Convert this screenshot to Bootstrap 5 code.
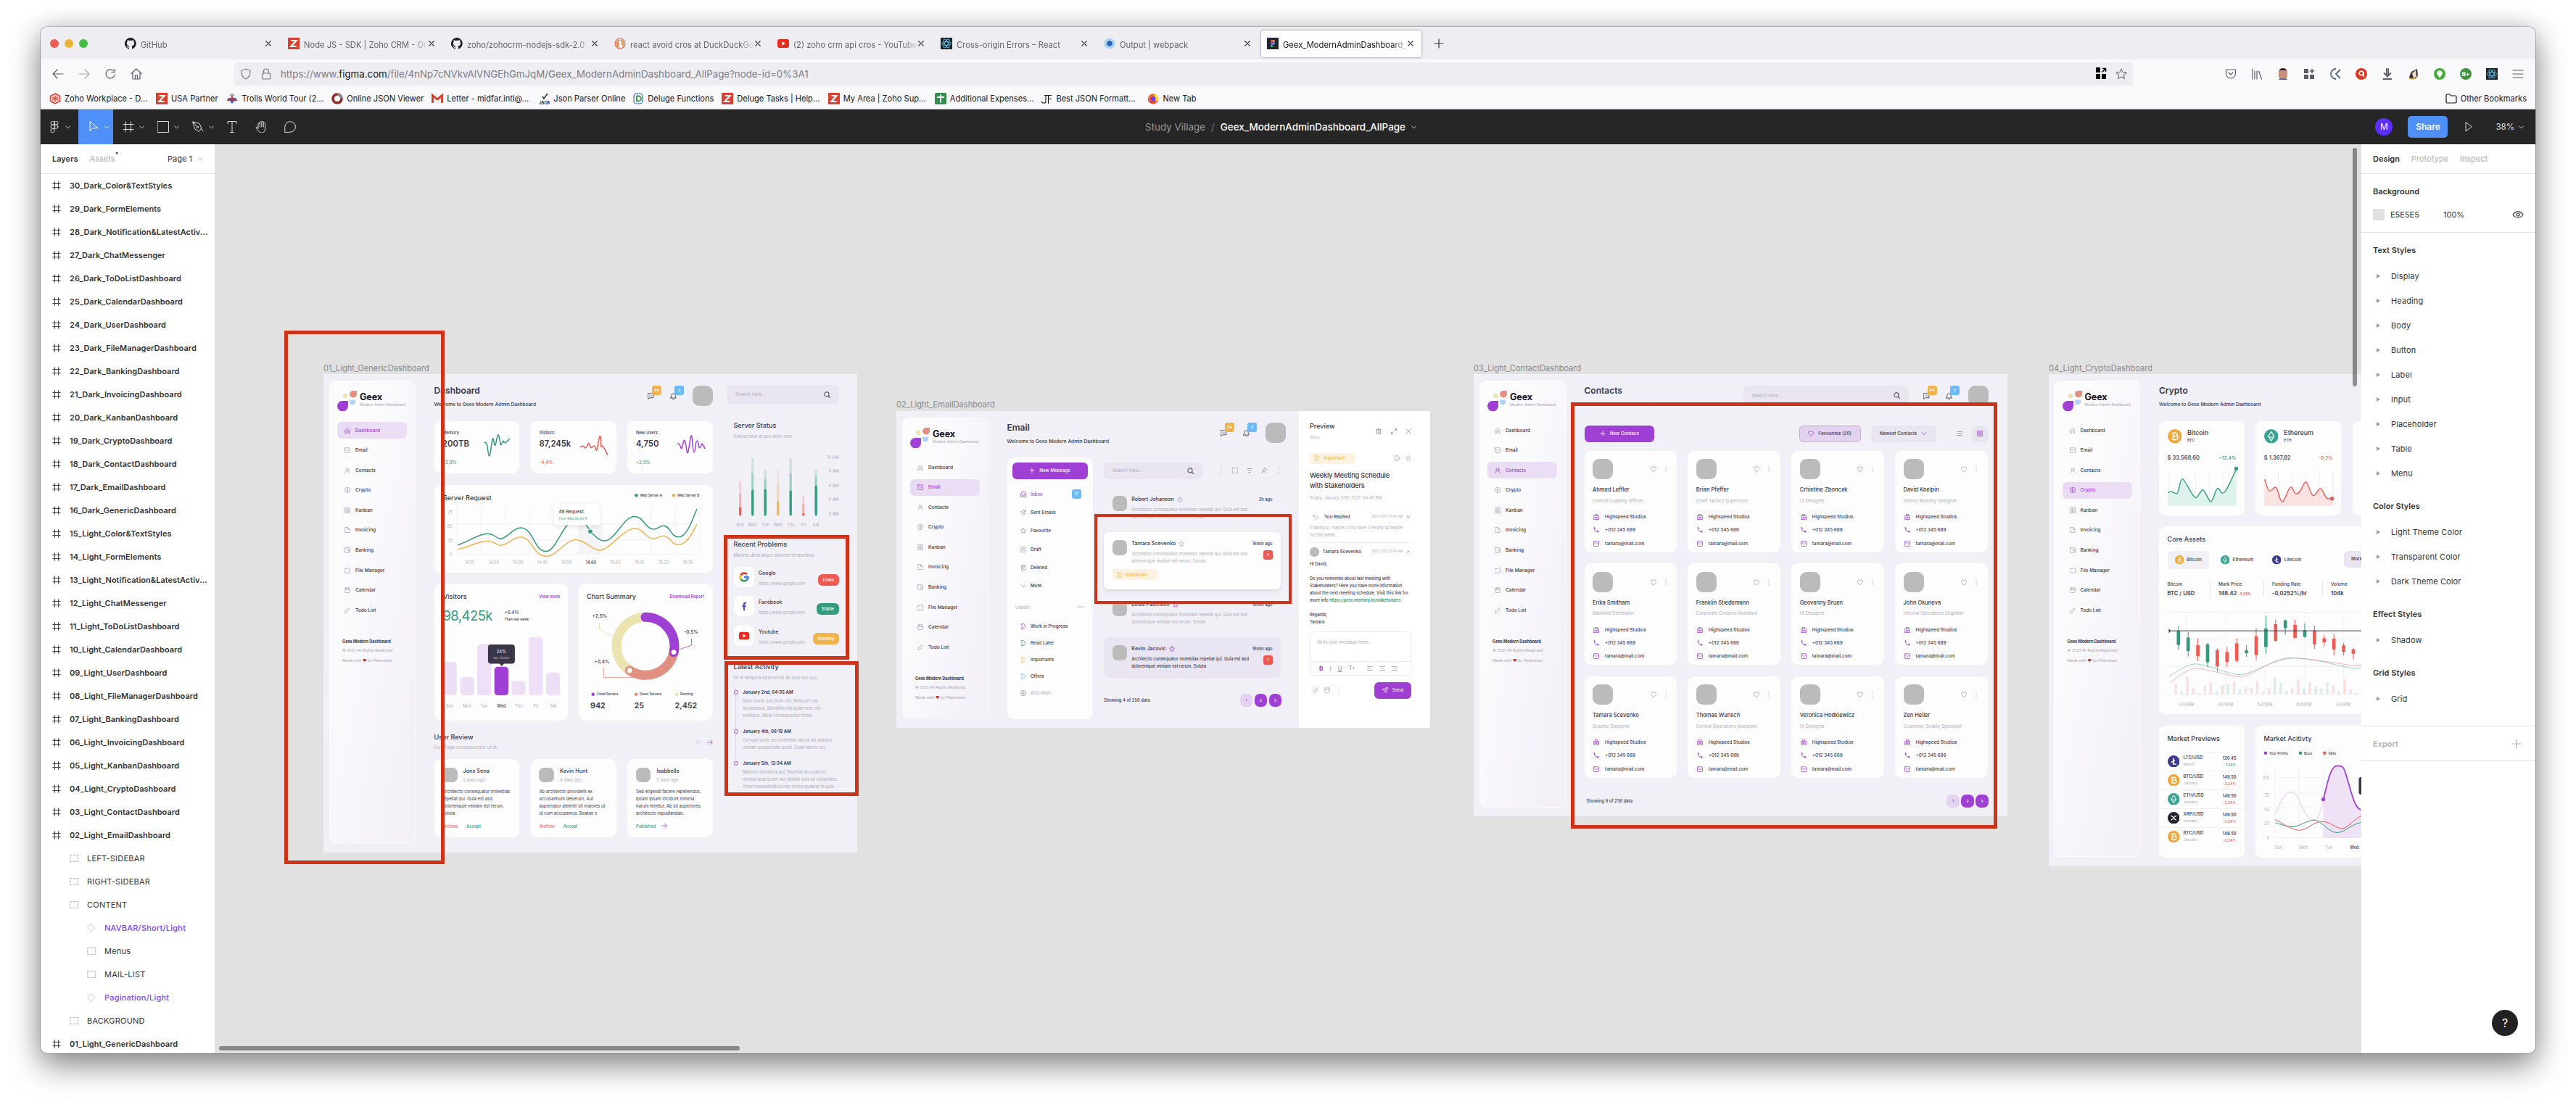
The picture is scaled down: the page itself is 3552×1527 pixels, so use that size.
<!DOCTYPE html>
<html lang="en">
<head>
<meta charset="utf-8">
<meta name="viewport" content="width=device-width, initial-scale=1">
<title>Geex_ModernAdminDashboard_AllPage</title>
<link rel="stylesheet" href="https://cdn.jsdelivr.net/npm/bootstrap@5.3.0/dist/css/bootstrap.min.css">
<style>
body{background:#fff;font-family:Inter,"Liberation Sans",sans-serif;font-size:11px;line-height:16px;color:#333;overflow:hidden;width:3552px;height:1527px}
i[data-ic]{display:inline-flex;flex:none;font-style:normal}
svg{display:block}
.ic{width:16px;height:16px;fill:none;stroke:currentColor;stroke-width:1.2;stroke-linecap:round;stroke-linejoin:round;overflow:visible}
.browser{width:3440px;height:1416px;border-radius:10px;overflow:hidden;background:#f9f9fb}
.shade{border-radius:10px;width:3440px;height:1416px;margin:37px 56px;box-shadow:0 0 0 1px rgba(0,0,0,.22),0 18px 44px rgba(0,0,0,.42),0 0 34px rgba(0,0,0,.16)}
/* browser chrome */
.tabstrip{height:45px;background:#eeedf2;padding-left:13px}
.lights{width:95px;gap:8px}
.light{width:12px;height:12px;border-radius:50%}
.l-r{background:#ec5f55}.l-y{background:#ecb537}.l-g{background:#3ec040}
.btab{width:221px;height:37px;margin-right:4px;padding:0 8px;border-radius:4px;color:#66656b;font-size:11.2px;margin-top:1px}
.btab.on{background:#fff;color:#15141a;box-shadow:0 0 3px rgba(40,30,80,.55)}
.btab .ttl{flex:1;margin-left:6px;white-space:nowrap;overflow:hidden;-webkit-mask-image:linear-gradient(90deg,#000 88%,transparent);padding-top:3px}
.btab .x{width:8px;height:8px;color:#333;margin-right:3px}
.btab .x .ic{width:8px;height:8px;stroke-width:2.2}
.fav{width:16px;height:16px;flex:none;display:flex;align-items:center;justify-content:center;overflow:hidden}
.fav svg{width:16px;height:16px}
.urlrow{height:36px;padding:4px 16px 0 16px;color:#5b5b66}
.urlbox{width:2618px;height:32px;background:#eeedf2;border-radius:4px;font-size:13.3px;color:#7c7b83;padding:0 8px}
.urlbox b{font-weight:400;color:#15141a}
.navs{width:251px;gap:20px}
.exts{gap:20px}
.marks{height:33px;padding:3px 0 0 12px;color:#15141a;font-size:11.1px;border-bottom:1px solid #c3c3c6}
.mk{gap:5px;white-space:nowrap;flex:none}
/* editor bar */
.ebar{height:48px;background:#262626;color:#dcdcdc;font-size:13.4px}
.ebar .ic{stroke-width:1}
.tool{height:48px;width:48px;gap:7px;padding-left:13px}
.tool.one{width:40px;padding-left:12px}
.tool.mainm{width:52px;padding-left:11px}
.tool.on{background:#4f8ff8;color:#fff}
.tool .cv .ic,.cvs .ic{width:7px;height:7px;stroke-width:2}
.usr{width:24px;height:24px;border-radius:50%;background:#5b2eff;color:#fff;font-size:12px;margin-right:21px}
.share{width:55px;height:30px;border-radius:5px;background:#4f8ff8;color:#fff;font-size:12px;font-weight:600;margin-right:21px}
.zoomv{font-size:11.5px;margin:0 6px 0 29px}
/* side panels */
.pane{width:240px;background:#fff;flex:none;overflow:hidden;font-size:11px}
.phead{height:41px;border-bottom:1px solid #e2e2e2;padding:0 16px;flex:none}
.dim{color:#b0b0b0}
.lay{height:32px;padding-left:16px;gap:8px;flex:none;white-space:nowrap;letter-spacing:.02em}
.lay.frm{font-weight:600;letter-spacing:.002em}
.lay .ic{width:12px;height:12px;stroke-width:1.3}
.lay i{width:16px;justify-content:center}
.lay.d1{padding-left:40px}.lay.d2{padding-left:64px}
.lay.cmp{color:#7b44f2;font-weight:500}.lay.cmp i{color:#cdbcf8}.lay.grp i{color:#aaa}
.sec{padding:8px 16px 0}
.sec .st{height:32px;font-weight:600;line-height:32px;margin-bottom:3px}
.sec .si{height:34px;line-height:34px;padding-left:5px;letter-spacing:.01em}
.sec .si::before{content:"";display:inline-block;border-left:5px solid #999;border-top:3px solid transparent;border-bottom:3px solid transparent;margin-right:15px;vertical-align:1px}
.hl{border-top:1px solid #e2e2e2}
.help{width:36px;height:36px;border-radius:50%;background:#222;color:#fff;font-size:16px;right:24px;bottom:24px}
.swt{width:16px;height:16px;background:#e1e1e1}
/* free canvas */
.cnv{width:2960px;background:#e1e1e1;overflow:hidden;flex:none}
.board{position:absolute;background:#f1f0f7;width:736px;font-size:6.3px;line-height:10px;color:#3a3748;white-space:nowrap;font-weight:500}
.board .ic{width:8px;height:8px;stroke-width:1.5}
.bl{position:absolute;font-size:11.1px;color:#8a8a8a;line-height:14px}
#b1{left:150px;top:317px;height:660px}#b2{left:940px;top:368px;height:437px}#b3{left:1736px;top:317px;height:610px}#b4{left:2528.5px;top:317px;height:679px;width:431.5px;overflow:hidden}
#n1{left:150px;top:302px}#n2{left:940px;top:352px}#n3{left:1736px;top:302px}#n4{left:2529px;top:302px}
.ann{position:absolute;border:5px solid #cc3318}
#r1{left:96px;top:257px;width:221px;height:736px}#r2{left:702px;top:539px;width:173px;height:172px}#r3{left:703px;top:713px;width:185px;height:186px}#r4{left:1213px;top:510px;width:272px;height:124px;border-width:4.5px}#r5{left:1870px;top:356px;width:588px;height:588px}
.sbv{position:absolute;right:6px;top:5px;width:6px;height:329px;border-radius:3px;background:rgba(0,0,0,.4)}
.sbh{position:absolute;left:6px;bottom:4px;width:718px;height:6px;border-radius:3px;background:rgba(0,0,0,.4)}
/* Geex boards */
.side{width:119px;margin:9px 0 0 7.5px;border-radius:9px;border:1px solid #fbfaff;background:linear-gradient(100deg,#fcfcfd 20%,#f3f0f8 90%);padding:13px 10.5px;flex:none}
#b1 .side{height:638px}#b2 .side{height:415px}#b3 .side{height:589px}#b4 .side{height:657px}
.lg{height:28px;gap:4px}
.lg b{font-size:12.6px;line-height:13px;font-weight:700;color:#16141f;letter-spacing:-.01em;display:block;margin-top:2px}
.lg small{font-size:5.1px;line-height:9px;color:#a9a6b4;display:block;font-weight:400}
.nv{margin-top:15px;gap:4.6px}
.nv div{height:23px;border-radius:6px;padding-left:10px;gap:7px;font-size:6.5px}
.nv i{color:#a5a3af}
.nv .on{background:linear-gradient(90deg,#e9dbf4,#ebdff5);color:#a03fd4}.nv .on i{color:#a03fd4}
.ft{padding:26.6px 0 0 7px;font-size:5.4px;color:#a9a6b4;font-weight:400}
.ft b{color:#3a3748;display:block;font-weight:700;letter-spacing:-.01em;font-size:5.6px}.ft span{display:block;margin-top:1.6px}.ft span+span{margin-top:4px}
.th{font-size:12px;line-height:14px;font-weight:600}
.ts{font-size:9.1px;line-height:12px;font-weight:500}
.mut{color:#aeacb8;font-weight:400}
.pu{color:#a03fd4}.gr{color:#339b7b}.re{color:#ee5a52}.or{color:#f1b44c}.bu{color:#6cbaf8}
.mn{width:384.5px;margin-left:26px;flex:none}
.hd{height:48.5px;margin-top:16px}
.hd .sb{margin-top:6.5px;font-size:6.65px}
.nb{position:relative;width:31px;height:28px;padding-top:10px}
.nb .ic{width:9px;height:9px}
.bdg{background:#f1b44c;color:#fff;border-radius:3px;width:13px;height:13px;font-size:5.2px;line-height:13px;text-align:center}
.nb .bdg{position:absolute;left:6px;top:0}
.bdg.b{background:#6cbaf8}.bdg.r{background:#ee5a52}
.av{background:#bbb;flex:none;width:28px;height:28px;border-radius:9px}
.av.s{width:20.5px;height:20.5px;border-radius:7px}.av.t{width:12.5px;height:12.5px;border-radius:6px}
.sr{background:#e9e6f2;border-radius:6px;height:27.5px;padding:0 12px;color:#aeacb8;font-weight:400}
.sr i{color:#3a3748}.sr .ic{width:9px;height:9px;stroke-width:1.8}
.cd{background:#fdfdfe;border-radius:9px;flex:none}
.stat{width:117.6px;height:72.7px;padding:11.5px}
.stat .v{font-size:11.3px;line-height:14px;font-weight:600;margin:2.5px 0 14px}
.stat .l{font-size:5.8px}
.stat svg{width:40px;height:34px;margin-top:6px;margin-right:-1px;fill:none;stroke-width:1.5;overflow:visible}
svg .p{vector-effect:non-scaling-stroke;fill:none}
svg text{font-size:5.7px;fill:#aeacb8;font-weight:400}
svg text.k{fill:#3a3748;font-weight:500}
svg text.num{font-size:10.8px;font-weight:600}
svg text.hdg{font-size:9.1px}
.rev{width:117.6px;padding:11.5px;height:108px}
.rev .tx{font-size:5.9px;margin-top:8px;font-weight:400}
.btn-p{background:#a03fd4;color:#fff;border-radius:6px;height:23.5px;gap:6px;font-size:6.3px}
.prow{height:28px;margin-bottom:12.7px}
.prow .bx{width:28px;height:28px;border-radius:8px;background:#fff;margin-right:6.5px}
.prow .bx svg{width:14px;height:14px}
.pil{color:#fff;border-radius:6px;height:16px;line-height:16px;padding:0 6.5px;font-size:5.7px;margin-top:8px}
.tl{border-left:1px solid #d9d6e4;margin-left:2.5px;padding-left:9px;position:relative}
.tl::before{content:"";position:absolute;left:-3px;top:2px;width:6px;height:6px;border:1.3px solid #a03fd4;border-radius:50%;background:#fff}
.tl.last{border-color:transparent}
.tl b{font-weight:600;display:block;font-size:6.1px;margin-bottom:2px}
.mm{height:25.3px;padding-left:18px;gap:6.5px}
.mm i{color:#9b98a8}.mm.lb{height:23px}
.chip{background:#fcf2df;color:#f1b44c;height:15px;border-radius:4px;width:62.5px;gap:5px;padding-left:6px}
.pg span{width:17.5px;height:18px;border-radius:7px;background:#a03fd4;color:#fff;text-align:center;line-height:18px;font-size:5px}
.pg{gap:2.3px}.pg span:first-child{background:#e4d3f0;color:#a03fd4}
.em{width:244px;padding:11.5px;border-radius:7px;font-size:5.75px}
.em .nm{font-size:7.2px}
.em .chip{font-size:6.3px}
.em .bd{width:174px;margin-left:6.3px}
.when{margin-left:-20px;width:60px;text-align:right}
.prev{width:180.6px;background:#fff;margin-left:auto;padding:14.6px 26px 0 14.6px;flex:none}
.cc{height:140px;padding:11.5px}
.ccg{display:grid;grid-template-columns:repeat(4,127.6px);gap:15.5px 15.25px}
.cc .nm{font-size:7.5px;margin-top:10.2px}
.cc .rl{margin:4.3px 0 8.2px;font-size:6.2px}
.cc .rw{height:18.4px;gap:8px;margin-left:1px}
.cc .rw i{color:#a03fd4}
.cc .top{color:#9b98a8;gap:9px}
.coin{width:19.5px;height:19.5px}.coin.m{width:16.5px;height:16.5px}.coin.s{width:12.5px;height:12.5px}
.mp{height:26px;border-top:1px solid #f3f1f6;padding:0 11.5px;gap:5.5px;line-height:9px}
.kpi{border-left:1px solid #e6e4ee;height:22px;padding-left:11.5px}
.kpi b{display:block;font-weight:600;font-size:7.6px;line-height:11px;margin-top:2px}
</style>
</head>
<body>
<svg width="0" height="0" class="position-absolute" aria-hidden="true"><defs>
<symbol id="home" viewBox="0 0 16 16"><path d="M2 6.5 8 1l6 5.500V15h-3.500V9.500a2.500 2.500 0 0 0-5 0V15H2z"/></symbol>
<symbol id="mail" viewBox="0 0 16 16"><rect x="1" y="1.500" width="14" height="13.500" rx="1.500"/><path d="m3.500 5 4.500 4.500L12.500 5"/></symbol>
<symbol id="user" viewBox="0 0 16 16"><circle cx="8" cy="5" r="4"/><path d="M1.500 15.500C2 11 4.500 9 8 9s6 2 6.500 6.500"/></symbol>
<symbol id="coin" viewBox="0 0 16 16"><circle cx="8" cy="8" r="7.300"/><path d="M10.500 5.500C9 4 5.800 4.500 5.800 6.300 5.800 8.500 10.300 7.500 10.300 9.800c0 1.900-3.500 2-5 .5M8 3.500v9"/></symbol>
<symbol id="grid" viewBox="0 0 16 16"><path d="M1 1h5.500v5.500H1zM9.500 1H15v5.500H9.500zM1 9.500h5.500V15H1zM9.500 9.500H15V15H9.500z"/></symbol>
<symbol id="file" viewBox="0 0 16 16"><path d="M2.500 1H9l5 5v9H2.500zM9 1v5h5"/></symbol>
<symbol id="wallet" viewBox="0 0 16 16"><rect x="1" y="1.500" width="14" height="13" rx="1"/><path d="M15 6h-4.500a2 2 0 0 0 0 4H15"/></symbol>
<symbol id="folder" viewBox="0 0 16 16"><path d="M1 3h7l1.500-1.800H15V14.500H1z"/></symbol>
<symbol id="bfold" viewBox="0 0 16 16"><path d="M1 3.500a1.500 1.500 0 0 1 1.500-1.500H6l1.500 2h6A1.500 1.500 0 0 1 15 5.500v7a1.500 1.500 0 0 1-1.500 1.500h-11A1.500 1.500 0 0 1 1 12.500z"/></symbol>
<symbol id="cal" viewBox="0 0 16 16"><rect x="1.500" y="2" width="13" height="13" rx="2"/><path d="M1.500 7h13M5 .5v3M11 .5v3"/></symbol>
<symbol id="pencil" viewBox="0 0 16 16"><path d="m1.500 14.500.8-4.500L11 1.300l3.500 3.400L6 13.600z"/></symbol>
<symbol id="chat" viewBox="0 0 16 16"><path d="M1 1.500h13V12H5l-4 3zM4.500 7h.1M7.500 7h.1M10.500 7h.1"/></symbol>
<symbol id="bell" viewBox="0 0 16 16"><path d="M1 12.500h14L13 10V6.500a5 5 0 0 0-10 0V10zM6.500 15.300h3"/></symbol>
<symbol id="search" viewBox="0 0 16 16"><circle cx="7" cy="7" r="5.500"/><path d="m11 11 4 4"/></symbol>
<symbol id="heart" viewBox="0 0 16 16"><path d="M8 15C2 11 1 8 1 5.500 1 1.500 6 .5 8 4c2-3.500 7-2.500 7 1.500C15 8 14 11 8 15z"/></symbol>
<symbol id="vdots" viewBox="0 0 16 16"><path d="M8 2v.2M8 8v.2M8 14v.2" stroke-width="2.500"/></symbol>
<symbol id="hdots" viewBox="0 0 16 16"><path d="M2 8h.2M8 8h.2M14 8h.2" stroke-width="2.500"/></symbol>
<symbol id="plus" viewBox="0 0 16 16"><path d="M8 2v12M2 8h12"/></symbol>
<symbol id="x" viewBox="0 0 16 16"><path d="m1.500 1.500 13 13M14.500 1.500l-13 13"/></symbol>
<symbol id="star" viewBox="0 0 16 16"><path d="m8 1 2.100 4.700 5 .5-3.800 3.400 1.100 5L8 12l-4.400 2.600 1.100-5L.9 6.200l5-.5z"/></symbol>
<symbol id="send" viewBox="0 0 16 16"><path d="M15 1 9.500 15 7 9 1 6.500zM15 1 7 9"/></symbol>
<symbol id="trash" viewBox="0 0 16 16"><path d="M1 3.500h14M3 3.500V15h10V3.500M5.500 3.500V1h5v2.500M6.500 7v5M9.500 7v5"/></symbol>
<symbol id="cd" viewBox="0 0 16 16"><path d="m1.500 4.500 6.500 7 6.500-7"/></symbol>
<symbol id="cu" viewBox="0 0 16 16"><path d="m1.500 11.500 6.500-7 6.500 7"/></symbol>
<symbol id="label" viewBox="0 0 16 16"><path d="M2 1.500h7.500L14.500 8l-5 6.500H2L5.500 8z"/></symbol>
<symbol id="inbox" viewBox="0 0 16 16"><path d="M1 9 3 1.500h10L15 9v6H1zM1 9h4l1 2.500h4L11 9h4"/></symbol>
<symbol id="edit" viewBox="0 0 16 16"><path d="M9 2H1.500v13H14V8M5.500 11l.5-3 7-7 2 2-7 7z"/></symbol>
<symbol id="addc" viewBox="0 0 16 16"><circle cx="8" cy="8" r="7.300"/><path d="M8 4.500v7M4.500 8h7"/></symbol>
<symbol id="info" viewBox="0 0 16 16"><circle cx="8" cy="8" r="7"/><path d="M8 4.500V9M8 11.500v.1"/></symbol>
<symbol id="sq" viewBox="0 0 16 16"><rect x="0" y=".5" width="16" height="15" rx="1.500"/></symbol>
<symbol id="filt" viewBox="0 0 16 16"><path d="M2 3h12M4 8h8M6 13h4"/></symbol>
<symbol id="pin" viewBox="0 0 16 16"><path d="m10 1 5 5-2 .5-3 3L9.500 13 3 6.500 6.500 6l3-3zM6 10l-5 5"/></symbol>
<symbol id="exp" viewBox="0 0 16 16"><path d="M10 1h5v5M15 1l-5.500 5.500M6 15H1v-5M1 15l5.500-5.500"/></symbol>
<symbol id="reply" viewBox="0 0 16 16"><path d="M5.500 1.500 1 5.500l4.500 4M1 5.500h9c6 0 6 9 0 9H8"/></symbol>
<symbol id="brief" viewBox="0 0 16 16"><path d="M1 5h14v10H1zM5 5V1h6v4M1 10h5M10 10h5M6.500 8.500h3v3h-3z"/></symbol>
<symbol id="phone" viewBox="0 0 16 16"><path d="M2.500 1.500v1c0 6 5 11 11.500 11" stroke-width="2" fill="none"/><path d="M1.500 1h3l.8 4-2.300 1zM10 12l1-2 4 1v3.500h-3z" fill="currentColor" stroke="none"/></symbol>
<symbol id="clip" viewBox="0 0 16 16"><path d="m14 7-6 6.500a3 3 0 0 1-5-4L9 3a2 2 0 0 1 3.500 3L7 11.500"/></symbol>
<symbol id="al" viewBox="0 0 16 16"><path d="M1 3h14M1 8h9M1 13h14"/></symbol>
<symbol id="ac" viewBox="0 0 16 16"><path d="M1 3h14M4 8h8M1 13h14"/></symbol>
<symbol id="ar" viewBox="0 0 16 16"><path d="M1 3h14M6 8h9M1 13h14"/></symbol>
<symbol id="menu" viewBox="0 0 16 16"><path d="M1 3h14M1 8h14M1 13h14"/></symbol>
<symbol id="left" viewBox="0 0 16 16"><path d="M15 8H1.500M7 2 1 8l6 6"/></symbol>
<symbol id="right" viewBox="0 0 16 16"><path d="M1 8h13.500M9 2l6 6-6 6"/></symbol>
<symbol id="reload" viewBox="0 0 16 16"><path d="M14 9a6 6 0 1 1-1.500-5.200M14.500 1v4.500H10"/></symbol>
<symbol id="house" viewBox="0 0 16 16"><path d="m1 7.500 7-6.500 7 6.500M3 6v9h10V6M6.500 15V9.500h3V15"/></symbol>
<symbol id="shield" viewBox="0 0 16 16"><path d="M8 1C6 2.500 4 3 2 3c-.5 6 1.500 10 6 12 4.500-2 6.500-6 6-12-2 0-4-.5-6-2z"/></symbol>
<symbol id="lock" viewBox="0 0 16 16"><rect x="2.500" y="7" width="11" height="8" rx="1"/><path d="M4.500 7V4.500a3.500 3.500 0 0 1 7 0V7"/></symbol>
<symbol id="hash" viewBox="0 0 16 16"><path d="M4.500 1v14M11.500 1v14M1 4.500h14M1 11.500h14"/></symbol>
<symbol id="grp" viewBox="0 0 16 16"><path d="M1 4V2h2M6.500 2h3M13 2h2v2M15 6.500v3M15 12v2h-2M9.500 14h-3M3 14H1v-2M1 9.500v-3"/></symbol>
<symbol id="dia" viewBox="0 0 16 16"><path d="m8 1 7 7-7 7-7-7z"/></symbol>
<symbol id="figma" viewBox="0 0 16 16"><path d="M8 0H5.500a2.500 2.500 0 0 0 0 5H8zM8 0h2.500a2.500 2.500 0 0 1 0 5H8zM8 5.300H5.500a2.500 2.500 0 0 0 0 5H8zM8 10.600H5.500A2.600 2.600 0 1 0 8 13.400z"/><circle cx="10.500" cy="7.800" r="2.500"/></symbol>
<symbol id="move" viewBox="0 0 16 16"><path d="M3 1v13l4-4 6.500-.5z"/></symbol>
<symbol id="rect" viewBox="0 0 16 16"><path d="M.5.500h15v15H.5z"/></symbol>
<symbol id="pen" viewBox="0 0 16 16"><path d="m1 1 9 2.500 3 6.500-4 4.500L4 11zM1 1l6 7M12 10.500l3 3.500"/><circle cx="7.500" cy="8.300" r="1.200"/></symbol>
<symbol id="text" viewBox="0 0 16 16"><path d="M2 3.500V.5h12v3M8 .5v15M5.500 15.500h5"/></symbol>
<symbol id="hand" viewBox="0 0 16 16"><path d="M4 10V4a1.200 1.200 0 0 1 2.400 0V2a1.200 1.200 0 0 1 2.400 0V1.500a1.200 1.200 0 0 1 2.400 0V3a1.200 1.200 0 0 1 2.400.3V11c0 6-7.600 6.500-9.600 2.500L.8 9c.8-1.500 2.200-1 3.200 1zM6.400 4v4M8.800 3v5M11.200 3v5"/></symbol>
<symbol id="cmt" viewBox="0 0 16 16"><path d="M.8 15.300V8A7.300 7.300 0 1 1 8 15.300z"/></symbol>
<symbol id="play" viewBox="0 0 16 16"><path d="M4 2v12l8-6z"/></symbol>
<symbol id="eye" viewBox="0 0 16 16"><path d="M1 8c4-5.500 10-5.500 14 0-4 5.500-10 5.500-14 0z"/><circle cx="8" cy="8" r="2"/></symbol>
<symbol id="pocket" viewBox="0 0 16 16"><path d="M1.500 2h13v5.500a6.500 6.500 0 0 1-13 0zM5 6l3 3 3-3"/></symbol>
<symbol id="books" viewBox="0 0 16 16"><path d="M2 1v14M5 4v11M8 4v11M10.500 4l4 11"/></symbol>
<symbol id="dl" viewBox="0 0 16 16"><path d="M6.800 1v9M9.200 1v9M3.500 7 8 11.500 12.500 7M2.500 15h11" stroke-width="1.800"/></symbol>
<symbol id="tiles" viewBox="0 0 16 16"><path d="M1 1h6v6H1zM1 9h6v6H1zM9 9h6v6H9z" fill="currentColor" stroke="none"/><path d="M9.500 4h5M12 1.500v5" stroke-width="1.600"/></symbol>
<symbol id="tilesx" viewBox="0 0 16 16"><path d="M1 0h6v7H1zM1 9h6v7H1zM9 9h6v7H9z" fill="currentColor" stroke="none"/><path d="M10 6l4-4M10.500 1.500H14.500V5.500" stroke-width="1.600"/></symbol>
<!-- full-colour marks -->
<symbol id="f-gh" viewBox="0 0 16 16"><path fill="#1b1f24" d="M8 0a8 8 0 0 0-2.500 15.600c.4 0 .5-.2.500-.4v-1.500c-2.200.5-2.700-1-2.700-1-.4-1-.9-1.200-.9-1.200-.7-.5.1-.5.1-.5.800.1 1.200.8 1.200.8.700 1.200 1.900.9 2.300.7.100-.5.300-.9.500-1.100-1.800-.2-3.600-.9-3.600-4 0-.8.300-1.500.8-2.100 0-.2-.3-1 .1-2.100 0 0 .7-.2 2.200.8a7.600 7.600 0 0 1 4 0c1.500-1 2.200-.8 2.200-.8.400 1.100.1 1.900.1 2.100.5.600.8 1.300.8 2.100 0 3.100-1.900 3.800-3.700 4 .3.300.6.800.6 1.500v2.200c0 .2.100.5.500.4A8 8 0 0 0 8 0z"/></symbol>
<symbol id="f-z" viewBox="0 0 16 16"><path fill="#d8402f" d="M0 0h16v16H0z"/><path d="M4.500 4h7l-7 8h7" fill="none" stroke="#fff" stroke-width="2.200"/></symbol>
<symbol id="f-ddg" viewBox="0 0 16 16"><circle cx="8" cy="8" r="7.500" fill="#de5833"/><circle cx="8" cy="8" r="6" fill="#e98a63" stroke="#fff"/><path d="M6 4c3-1 5 1 4.500 5l.5 4H7z" fill="#fff"/><path d="M8.500 8h3.500" stroke="#f5b82e" stroke-width="1.500"/></symbol>
<symbol id="f-yt" viewBox="0 0 16 16"><rect y="2" width="16" height="12" rx="3" fill="#ea2a1f"/><path d="M6.300 5.200v5.600L11 8z" fill="#fff"/></symbol>
<symbol id="f-re" viewBox="0 0 16 16"><path fill="#20232a" d="M0 0h16v16H0z"/><g fill="none" stroke="#5ab8d8"><ellipse cx="8" cy="8" rx="6.500" ry="2.500"/><ellipse cx="8" cy="8" rx="6.500" ry="2.500" transform="rotate(60 8 8)"/><ellipse cx="8" cy="8" rx="6.500" ry="2.500" transform="rotate(120 8 8)"/></g></symbol>
<symbol id="f-wp" viewBox="0 0 16 16"><path d="m8 0 7 4v8l-7 4-7-4V4z" fill="#a9d3f3"/><path d="m8 4 3.500 2v4L8 12l-3.500-2V6z" fill="#2b5fb5"/></symbol>
<symbol id="f-fg" viewBox="0 0 16 16"><path fill="#24242e" d="M0 0h16v16H0z"/><path fill="#ef4f2b" d="M8 3H6.500a1.700 1.700 0 0 0 0 3.400H8z"/><path fill="#f9705f" d="M8 3h1.500a1.700 1.700 0 0 1 0 3.400H8z"/><path fill="#a259ff" d="M8 6.400H6.500a1.700 1.700 0 0 0 0 3.400H8z"/><circle cx="9.600" cy="8.100" r="1.700" fill="#26b6f4"/><circle cx="6.500" cy="11.400" r="1.700" fill="#1bce75"/></symbol>
<symbol id="f-wk" viewBox="0 0 16 16"><path d="m8 1 6.500 3.500v7L8 15l-6.500-3.500v-7z" fill="#f6cfcb" stroke="#df4034" stroke-width="1.500"/><path d="M8 4v8M4 6l8 4M12 6l-8 4" stroke="#df4034" stroke-width="1.300"/></symbol>
<symbol id="f-tr" viewBox="0 0 16 16"><path d="M8 1v4M5 2l3 4 3-4" stroke="#555" fill="none"/><path d="M2 7h12l-6 8z" fill="#3f51b5"/><path d="M1 9h5v2H1zM10 9h5v2h-5z" fill="#d33"/><circle cx="8" cy="8" r="2" fill="#d33"/></symbol>
<symbol id="f-oj" viewBox="0 0 16 16"><circle cx="8" cy="8" r="6" fill="none" stroke="#8f2a2a" stroke-width="3.500"/><path d="M8 2a6 6 0 0 1 6 6" fill="none" stroke="#888" stroke-width="3.500"/></symbol>
<symbol id="f-gm" viewBox="0 0 16 16"><path d="M1.500 14V3.500L8 9l6.500-5.500V14" fill="#eee" stroke="#d5392d" stroke-width="2.800"/></symbol>
<symbol id="f-js" viewBox="0 0 16 16"><path d="m6 5 2 3 5-7" stroke="#222" stroke-width="1.400" fill="none"/><text x="1" y="15.500" style="font-size:6px;fill:#1c1c5c;font-weight:700">JSON</text></symbol>
<symbol id="f-df" viewBox="0 0 16 16"><rect x="2" y="1" width="12" height="14" rx="4" fill="none" stroke="#3c6fc4" stroke-width="1.600" stroke-dasharray="2 .8"/><path d="M6 4.500h2.500a3.500 3.500 0 0 1 0 7H6z" fill="none" stroke="#3a9c4c" stroke-width="1.800"/></symbol>
<symbol id="f-gs" viewBox="0 0 16 16"><rect width="16" height="16" rx="1.500" fill="#35904f"/><path d="M8 2.500v11M3 6h10" stroke="#fff" stroke-width="1.800"/></symbol>
<symbol id="f-jf" viewBox="0 0 16 16"><path d="M5 3.500h10M7 3.500V12c0 3-5 3-6 0M10.500 3.500v11.500M10.500 8.500H15" stroke="#111" stroke-width="1.100" fill="none"/></symbol>
<symbol id="f-ff" viewBox="0 0 16 16"><circle cx="8" cy="8.500" r="7.200" fill="#f9692f"/><path d="M9 0c4 2 6.500 5 6 9-1 4-4 3-6-1z" fill="#fddc3b"/><circle cx="8" cy="8.500" r="3.600" fill="#7a3bd8"/><path d="M1 9c1 6 10 8 13 2-3 3-9 3-13-2z" fill="#e8305f"/></symbol>
<symbol id="f-face" viewBox="0 0 16 16"><rect x="2" y="0" width="12" height="16" rx="5" fill="#c98f78"/><path d="M3 4c0-5 10-5 10 0l-1-1H4z" fill="#2a2020"/><path d="M2 16c1-3 11-3 12 0z" fill="#5a6690"/></symbol>
<symbol id="f-k" viewBox="0 0 16 16"><path d="M9 1a7 7 0 0 0 0 14M15 2 9 8l6 6" fill="none" stroke="#5a6873" stroke-width="1.800"/></symbol>
<symbol id="f-q" viewBox="0 0 16 16"><circle cx="8" cy="8" r="8" fill="#dd3a26"/><circle cx="8" cy="7" r="2.800" fill="none" stroke="#fff" stroke-width="1.600"/><path d="M10.800 5v7" stroke="#fff" stroke-width="1.600"/></symbol>
<symbol id="f-bg" viewBox="0 0 16 16"><path d="M2 12 5 5l8-4 1 9-4 4H3z" fill="#3a3430"/><path d="m6 7 5-4 1 8-4 3z" fill="#eadfce"/><path d="M2 14c3 1 8 1 12-2" stroke="#d59b4a" stroke-width="1.500" fill="none"/></symbol>
<symbol id="f-hg" viewBox="0 0 16 16"><circle cx="8" cy="8" r="8" fill="#44a838"/><path d="M8 3a4 4 0 0 1 2.500 7L8 13.500 5.500 10A4 4 0 0 1 8 3z" fill="#fff"/></symbol>
<symbol id="f-bp" viewBox="0 0 16 16"><circle cx="8" cy="8" r="8" fill="#409440"/><text x="2.500" y="11" style="font-size:8px;fill:#fff;font-weight:700">B+</text></symbol>
<symbol id="c-btc" viewBox="0 0 20 20"><circle cx="10" cy="10" r="10" fill="#f2a73b"/><path d="M7.500 5.500h4a2 2 0 0 1 0 4.300h-4zM7.500 9.800h4.600a2.200 2.200 0 0 1 0 4.600H7.500zM6 5.500h2M6 14.400h2M9 4v1.500M11.300 4v1.500M9 14.500V16M11.300 14.500V16" fill="none" stroke="#fff" stroke-width="1.500"/></symbol>
<symbol id="c-eth" viewBox="0 0 20 20"><circle cx="10" cy="10" r="10" fill="#3aa394"/><path d="m10 3.500 4 6.500-4 6.500L6 10zM6 10l4 2 4-2" fill="none" stroke="#fff" stroke-width="1.200"/></symbol>
<symbol id="c-ltc" viewBox="0 0 20 20"><circle cx="10" cy="10" r="10" fill="#3d3a90"/><path d="M9.500 4.500v10H14M6 11.500l6-3" fill="none" stroke="#fff" stroke-width="1.900"/></symbol>
<symbol id="c-xrp" viewBox="0 0 20 20"><circle cx="10" cy="10" r="10" fill="#23232b"/><path d="M5.500 6 10 9.500 14.500 6M5.500 14l4.500-3.500 4.500 3.500" fill="none" stroke="#fff" stroke-width="1.500"/></symbol>
<symbol id="geex" viewBox="0 0 27 28"><path fill="#a03fd4" d="M0 21a7 7 0 0 1 7-7h8v7a7.300 7.300 0 0 1-15 0z"/><path fill="#e08f80" d="M17 5a5 5 0 0 1 5-5h5v4.500a5 5 0 0 1-10 0z"/><path fill="#ebe3b0" d="M8 6.500a3 3 0 0 1 6 0V10h-3a3 3 0 0 1-3-3.500z"/><path fill="#b5d3f6" d="M17 12.500h8v4a4.200 4.200 0 0 1-8 0z"/></symbol>
</defs></svg>

<div class="shade"><div class="browser d-flex flex-column">
  <header class="tabstrip d-flex align-items-center flex-shrink-0">
    <div class="lights d-flex"><span class="light l-r"></span><span class="light l-y"></span><span class="light l-g"></span></div>
    <div class="d-flex" id="tabs"></div>
    <i data-ic="plus" class="ms-2 ps-1"></i>
  </header>
  <div class="urlrow d-flex align-items-center flex-shrink-0">
    <div class="navs d-flex align-items-center"><i data-ic="left"></i><i data-ic="right" class="opacity-50"></i><i data-ic="reload"></i><i data-ic="house"></i></div>
    <div class="urlbox d-flex align-items-center"><i data-ic="shield"></i><i data-ic="lock" class="ms-2 me-2 ps-1"></i><span id="url" class="ps-1">https://www.<b>figma.com</b>/file/4nNp7cNVkvAlVNGEhGmJqM/Geex_ModernAdminDashboard_AllPage?node-id=0%3A1</span>
      <span class="ms-auto text-black me-2 pe-1"><i data-ic="tilesx"></i></span><i data-ic="star"></i></div>
    <div class="exts d-flex align-items-center ms-auto" id="exts"></div>
  </div>
  <div class="d-flex align-items-center flex-shrink-0 marks">
    <div class="d-flex" id="marks"></div>
    <div class="mk d-flex align-items-center ms-auto me-2 pe-1"><i data-ic="bfold"></i>Other Bookmarks</div>
  </div>

  <div class="ebar d-flex align-items-center flex-shrink-0 position-relative">
    <div class="tool mainm d-flex align-items-center"><i data-ic="figma"></i><i data-ic="cd" class="cv"></i></div>
    <div class="tool on d-flex align-items-center"><i data-ic="move"></i><i data-ic="cd" class="cv"></i></div>
    <div class="tool d-flex align-items-center"><i data-ic="hash"></i><i data-ic="cd" class="cv"></i></div>
    <div class="tool d-flex align-items-center"><i data-ic="rect"></i><i data-ic="cd" class="cv"></i></div>
    <div class="tool d-flex align-items-center"><i data-ic="pen"></i><i data-ic="cd" class="cv"></i></div>
    <div class="tool one d-flex align-items-center"><i data-ic="text"></i></div>
    <div class="tool one d-flex align-items-center"><i data-ic="hand"></i></div>
    <div class="tool one d-flex align-items-center"><i data-ic="cmt"></i></div>
    <div class="position-absolute start-0 end-0 d-flex justify-content-center align-items-center gap-2 pe-3 me-1"><span style="color:#999">Study Village</span><span class="text-secondary">/</span><span class="text-white fw-medium">Geex_ModernAdminDashboard_AllPage</span><i data-ic="cd" class="cvs"></i></div>
    <div class="ms-auto d-flex align-items-center pe-3">
      <span class="usr d-flex align-items-center justify-content-center">M</span><span class="share d-flex align-items-center justify-content-center">Share</span>
      <i data-ic="play"></i><span class="zoomv">38%</span><i data-ic="cd" class="cvs"></i>
    </div>
  </div>

  <main class="d-flex flex-grow-1 overflow-hidden">
    <section class="pane d-flex flex-column">
      <div class="phead d-flex align-items-center"><b class="fw-semibold">Layers</b><span class="dim ms-3">Assets</span><span class="mb-3 fs-6 lh-1 fw-bold">·</span><span class="ms-auto me-1">Page 1</span><i data-ic="cd" class="cvs dim ms-1"></i></div>
      <div id="layers" class="d-flex flex-column"></div>
    </section>

    <section class="cnv position-relative">
      <div class="bl" id="n1">01_Light_GenericDashboard</div><div class="bl" id="n2">02_Light_EmailDashboard</div><div class="bl" id="n3">03_Light_ContactDashboard</div><div class="bl" id="n4">04_Light_CryptoDashboard</div>

      <!-- 01 generic dashboard -->
      <article class="board d-flex" id="b1">
        <aside class="side" data-on="Dashboard"></aside>
        <div class="mn">
          <div class="hd d-flex"><div class="me-auto"><div class="th">Dashboard</div><div class="sb">Welcome to Geex Modern Admin Dashboard</div></div><div class="nb"><i data-ic="chat"></i><span class="bdg">84</span></div><div class="nb"><i data-ic="bell"></i><span class="bdg b">2</span></div><div class="av"></div></div>
          <div class="d-flex justify-content-between">
            <div class="cd stat d-flex justify-content-between"><div><div class="l">Memory</div><div class="v">200TB</div><div class="gr">+2,5%</div></div><svg viewBox="0 0 40 34" stroke="#339b7b"><path d="M2 13c2-3 3 1 4 4 2 18 3 18 5 4 2-17 3-17 4-9 2 10 3 0 4-5 2-13 4 1 5 7 1 5 3-4 4-4 2 5 3 3 9-3"/></svg></div>
            <div class="cd stat d-flex justify-content-between"><div><div class="l">Visitors</div><div class="v">87,245k</div><div class="re">-4,4%</div></div><svg viewBox="0 0 40 34" stroke="#ee5a52"><path d="M1 19c3-3 5-2 7 1 3-1 4-10 6-5 2 9 4 2 6 2s3 8 4 6c2-7 3-22 5-19 1 5 0 12 1 14l2-1c3 4 4 7 7 13"/></svg></div>
            <div class="cd stat d-flex justify-content-between"><div><div class="l">New Users</div><div class="v">4,750</div><div class="gr">+2,5%</div></div><svg viewBox="0 0 40 34" stroke="#a03fd4"><path d="M1 14c2-1 3 1 4 3 2 8 3 1 4-4 2-8 3-2 4 4 2 16 3 11 5-4 2-14 3-13 4 1 1 17 3 13 4 4 1-11 3-9 4-3 2 10 3 1 5-1 2 2 3 4 4 7"/></svg></div>
          </div>
          <div class="cd mt-3"><svg width="384.500" height="121" viewBox="152.600 152.800 384.500 121">
            <text x="164.500" y="174" class="k hdg">Server Request</text>
            <circle cx="431" cy="167" r="2.300" fill="#339b7b"/><text x="436" y="169" class="k" style="font-size:4.700px">Web Server A</text><circle cx="482.500" cy="167" r="2.300" fill="#f1b44c"/><text x="487.500" y="169" class="k" style="font-size:4.700px">Web Server B</text>
            <path stroke="#f1f0f5" d="M183.500 206.500H519M183.500 228.500H519M183.500 248.500H519M183.500 183v66M217 183v66M250.500 183v66M284 183v66M451.500 183v66M485 183v66M518.500 183v66"/><path fill="#f4f3f8" d="M351 206h33.500v43H351z"/>
            <g id="yl" text-anchor="end"><text x="177.500" y="192.500">75</text><text x="177.500" y="212">50</text><text x="177.500" y="231.500">25</text><text x="177.500" y="251">0</text></g>
            <g id="xl" text-anchor="middle"></g>
            <g transform="matrix(.523 0 0 .4847 -66 -76)" stroke-width="1.500"><path class="p" stroke="#f1b44c" d="M480 655C510 648 535 632 557 632S580 644 592 644C610 644 625 620 645 620 675 620 680 675 712 675 740 675 765 628 790 628 815 628 835 658 853 658 880 658 915 596 946 596 970 596 975 625 995 625 1008 625 1010 617 1022 617 1040 617 1040 642 1062 642 1085 642 1100 603 1110 584"/><path class="p" stroke="#339b7b" d="M480 643C510 632 535 611 557 611S580 625 592 625C610 625 625 594 645 594 680 594 680 661 712 661 740 661 760 570 790 570 808 570 822 590 829 604 845 622 855 631 866 631 895 631 915 562 946 562 970 562 975 598 995 598 1008 598 1010 588 1022 588 1040 588 1040 620 1062 620 1085 620 1100 565 1110 540"/></g>
            <circle cx="367.500" cy="217" r="3.300" fill="#339b7b" stroke="#fff" stroke-width=".8"/><path fill="#fff" d="m364.500 207.500 3 4 3-4z"/><rect x="317.500" y="179" width="63" height="29" rx="3" fill="#fff" filter="drop-shadow(0 2px 3px rgba(0,0,0,.1))"/><text x="324" y="192.300" class="k" style="font-size:6.300px">48 Request</text><text x="324" y="201" style="fill:#339b7b;font-size:4.300px">From Web Server B</text>
          </svg></div>
          <div class="d-flex justify-content-between" style="margin-top:15px">
            <div class="cd"><svg width="184.600" height="189" viewBox="152.600 289 184.600 189">
              <text x="164.500" y="310" class="k hdg">Visitors</text><text x="326" y="309.500" text-anchor="end" style="fill:#a03fd4;font-weight:600">View more</text>
              <text x="164" y="340" style="font-size:18.500px;fill:#339b7b;letter-spacing:-.03em">98,425k</text><text x="249" y="331.500" class="k" style="font-size:6.300px">+0.4%</text><text x="249" y="340" class="k" style="font-size:4.700px">Than last week</text>
              <g transform="matrix(.523 0 0 .4847 -66 -76)" fill="#eddff6"><rect x="440" y="976" width="37" height="95" rx="9"/><rect x="486" y="1019" width="37" height="52" rx="9"/><rect x="531" y="925" width="37" height="146" rx="9"/><rect x="576" y="990" width="37" height="81" rx="9" fill="#a03fd4"/><rect x="621" y="1030" width="37" height="41" rx="9"/><rect x="667" y="905" width="37" height="166" rx="9"/><rect x="712" y="1006" width="37" height="65" rx="9"/></g>
              <rect x="226.500" y="373" width="37" height="26.500" rx="4" fill="#3a3748"/><path fill="#3a3748" d="m242 399 3.500 4 3.500-4z"/><text x="245" y="385" text-anchor="middle" style="fill:#fff;font-size:5.900px">24%</text><text x="245" y="393.500" text-anchor="middle" style="fill:#b9b6c8;font-size:4px">982 Visitors</text>
              <g text-anchor="middle"><text x="173.500" y="460">Sun</text><text x="197.500" y="460">Mon</text><text x="221" y="460">Tue</text><text x="245" y="460" class="k">Wed</text><text x="269" y="460">Thu</text><text x="292.500" y="460">Fri</text><text x="316.500" y="460">Sat</text></g>
            </svg></div>
            <div class="cd"><svg width="184.600" height="189" viewBox="353 289 184.600 189">
              <text x="364" y="310" class="k hdg">Chart Summary</text><text x="526" y="309.500" text-anchor="end" style="fill:#a03fd4;font-weight:600">Download Report</text>
              <g fill="none" stroke-width="13" stroke-linecap="round"><path stroke="#ebe3b0" d="M423.200 408.800A40 40 0 0 1 445 335.300"/><path stroke="#e08f80" d="M484.100 383.600A40 40 0 0 1 423.200 408.800"/><path stroke="#a03fd4" d="M445 335.300A40 40 0 0 1 484.100 383.600"/></g><circle cx="484.100" cy="383.600" r="3.400" fill="#fff"/><circle cx="423.200" cy="408.800" r="3.400" fill="#fff"/>
              <g fill="none" stroke-width=".8"><path stroke="#e3da9f" d="M381.500 343v9l19 9.500"/><path stroke="#a03fd4" d="M508.500 365v9l-17 6"/><path stroke="#e08f80" d="M387.500 405v13.500h42"/></g>
              <g text-anchor="middle"><text class="k" x="382" y="336" style="font-size:6.600px">+2,5%</text><text class="k" x="508" y="358" style="font-size:6.600px">-0,5%</text><text class="k" x="385" y="399.500" style="font-size:6.600px">+0,4%</text></g>
              <circle cx="372.700" cy="441.700" r="2.300" fill="#a03fd4"/><circle cx="432" cy="441.700" r="2.300" fill="#e08f80"/><circle cx="488" cy="441.700" r="2.300" fill="#ebe3b0"/>
              <g><text x="378" y="443.500" class="k" style="font-size:4.500px">Fixed Servers</text><text x="437" y="443.500" class="k" style="font-size:4.500px">Down Servers</text><text x="493" y="443.500" class="k" style="font-size:4.500px">Running</text><text x="369" y="461.500" class="k num">942</text><text x="429.500" y="461.500" class="k num">25</text><text x="485.500" y="461.500" class="k num">2,452</text></g>
            </svg></div>
          </div>
          <div class="d-flex justify-content-between align-items-center" style="margin:17px 0 11px"><div><div class="ts">User Review</div><div class="mut" style="margin-top:3px">Eum fuga consequuntur ut et.</div></div><div class="d-flex gap-2 pu"><i data-ic="left" class="opacity-25"></i><i data-ic="right"></i></div></div>
          <div class="d-flex justify-content-between align-items-start" id="revs"></div>
        </div>
        <div style="width:154.500px;margin:14.500px 0 0 19px">
          <div class="sr d-flex align-items-center justify-content-between">Search here...<i data-ic="search"></i></div>
          <div style="margin:23px 0 0 9.500px;width:145px"><div class="ts">Server Status</div><div class="mut" style="margin-top:4px;font-size:5.700px">Consectetur et quo dolor vero.</div>
            <svg width="147" height="104" viewBox="565.300 108 147 104" style="margin-top:17px" id="srv"></svg>
            <div class="ts" style="margin-top:17px">Recent Problems</div><div class="mut" style="margin:4px 0 10.500px;font-size:5.800px">Maiores dicta atque dolorem temporibus</div>
            <div class="prow d-flex"><div class="bx d-flex align-items-center justify-content-center"><svg viewBox="0 0 16 16" fill="none" stroke-width="3.200"><path stroke="#e33f2f" d="M2.800 5A6.200 6.200 0 0 1 12.500 3.600"/><path stroke="#f6bb2b" d="M2.800 11a6.200 6.200 0 0 1 0-6"/><path stroke="#38a653" d="M12.300 12.600A6.200 6.200 0 0 1 2.800 11"/><path stroke="#4a80ec" d="M8 8h6.200a6.200 6.200 0 0 1-2 4.700"/></svg></div><div class="me-auto pt-1"><div style="font-size:6.900px">Google</div><div class="mut pt-1" style="font-size:5.500px">https://www.google.com</div></div><span class="pil align-self-center" style="background:#ee5a52">Down</span></div>
            <div class="prow d-flex"><div class="bx d-flex align-items-center justify-content-center"><svg viewBox="0 0 16 16"><path d="M11.500 3H10c-1.500 0-2 .8-2 2v10M5 8h6" fill="none" stroke="#4a56c9" stroke-width="2.400"/></svg></div><div class="me-auto pt-1"><div style="font-size:6.900px">Facebook</div><div class="mut pt-1" style="font-size:5.500px">https://www.google.com</div></div><span class="pil align-self-center" style="background:#339b7b">Stable</span></div>
            <div class="prow d-flex"><div class="bx d-flex align-items-center justify-content-center"><svg><use href="#f-yt"/></svg></div><div class="me-auto pt-1"><div style="font-size:6.900px">Youtube</div><div class="mut pt-1" style="font-size:5.500px">https://www.google.com</div></div><span class="pil align-self-center" style="background:#f1b44c">Warning</span></div>
            <div class="ts" style="margin-top:23.500px">Latest Activity</div><div class="mut" style="margin:4px 0 9.500px;font-size:5.700px">Sit et tempora dicta omnis ab quia quo quo.</div>
            <div class="tl" style="height:54px"><b>January 2nd, 04:35 AM</b><div class="mut" style="font-size:5.700px">Illum omnis quo illum nisi. Nesciunt est<br>accusamus. Blanditiis nisi quae eum nisi<br>similique. Modi consequuntur totam</div></div>
            <div class="tl" style="height:44px"><b>January 4th, 06:19 AM</b><div class="mut" style="font-size:5.700px">Corrupti unde qui molestiae labore ad adipisci<br>veniam perspiciatis quasi. Quae labore vel.</div></div>
            <div class="tl last"><b>January 5th, 12:34 AM</b><div class="mut" style="font-size:5.700px">Maiores doloribus qui. Repellat accusamus<br>minima ipsa ipsam aut debitis quis sit voluptates.<br>Amet necessitatibus non minus quaerat et quis.</div></div>
          </div>
        </div>
      </article>

      <!-- 02 email -->
      <article class="board d-flex" id="b2">
        <aside class="side" data-on="Email"></aside>
        <div class="mn">
          <div class="hd d-flex"><div class="me-auto"><div class="th">Email</div><div class="sb">Welcome to Geex Modern Admin Dashboard</div></div><div class="nb"><i data-ic="chat"></i><span class="bdg">84</span></div><div class="nb"><i data-ic="bell"></i><span class="bdg b">2</span></div><div class="av"></div></div>
          <div class="d-flex" style="margin-top:-1px">
            <div class="cd" style="width:118px;height:361px;padding-top:7px" id="mbox">
              <div class="btn-p d-flex align-items-center justify-content-center mb-2" style="margin:0 7px"><i data-ic="plus"></i>New Message</div>
            </div>
            <div style="margin:7px 0 0 15.500px;width:245px">
              <div class="d-flex align-items-center"><div class="sr d-flex align-items-center justify-content-between" style="width:135.500px;height:23.500px">Search here...<i data-ic="search"></i></div><div class="ms-auto d-flex align-items-center" style="gap:12px;border-left:1px solid #e2dfeb;padding-left:16px;height:20px;color:#8d8a9b"><i data-ic="sq"></i><i data-ic="filt"></i><i data-ic="pin"></i><i data-ic="vdots"></i></div></div>
              <div class="em d-flex" style="margin-top:11.500px;height:61px"><div class="av s"></div><div class="bd"><div class="d-flex align-items-center gap-1 nm">Robert Johanson <i data-ic="star" class="mut"></i></div><div class="mut" style="margin-top:3.500px">Architecto consequatur molestias repellat qui. Quia est asd<br>doloremque veniam est rerum. Soluta</div></div><div class="when">2h ago</div></div>
              <div class="em cd" style="height:79px;box-shadow:0 2px 4px rgba(60,40,100,.12)"><div class="d-flex"><div class="av s"></div><div class="bd"><div class="d-flex align-items-center gap-1 nm">Tamara Scevenko <i data-ic="star" class="mut"></i></div><div class="mut" style="margin-top:3.500px">Architecto consequatur molestias repellat qui. Quia est asd<br>doloremque veniam est rerum. Soluta</div></div><div class="when">16min ago<div class="bdg r ms-auto mt-1">2</div></div></div><div class="chip d-flex align-items-center" style="margin-top:6.500px"><i data-ic="label"></i>Important</div></div>
              <div class="em d-flex" style="margin-top:5px;height:50px"><div class="av s"></div><div class="bd"><div class="d-flex align-items-center gap-1 nm">Louis Pattinson <i data-ic="star" class="pu"></i></div><div class="mut" style="margin-top:3.500px">Architecto consequatur molestias repellat qui. Quia est asd<br>doloremque veniam est rerum. Soluta</div></div><div class="when">18min ago</div></div>
              <div class="em d-flex" style="margin-top:11px;height:56.500px;background:#e9e5f2"><div class="av s"></div><div class="bd"><div class="d-flex align-items-center gap-1 nm">Kevin Jacovic <i data-ic="star" class="pu"></i></div><div style="margin-top:3.500px">Architecto consequatur molestias repellat qui. Quia est asd<br>doloremque veniam est rerum. Soluta</div></div><div class="when">18min ago<div class="bdg r ms-auto mt-1">1</div></div></div>
              <div class="d-flex justify-content-between align-items-center" style="margin-top:22px"><span style="font-size:5.900px">Showing 4 of 256 data</span><div class="pg d-flex"><span>1</span><span>2</span><span>3</span></div></div>
            </div>
          </div>
        </div>
        <div class="prev">
          <div class="d-flex align-items-center justify-content-between"><div><div class="ts">Preview</div><div class="mut" style="font-size:5.300px;margin-top:4px">Inbox</div></div><div class="d-flex" style="gap:12.500px;color:#8d8a9b"><i data-ic="trash"></i><i data-ic="exp"></i><i data-ic="x"></i></div></div>
          <div class="d-flex align-items-center" style="margin-top:17px"><div class="chip d-flex align-items-center me-auto"><i data-ic="label"></i>Important</div><div class="mut d-flex gap-2"><i data-ic="info"></i><i data-ic="star"></i></div></div>
          <div style="font-size:9.200px;line-height:13.700px;font-weight:500;margin-top:9.500px;letter-spacing:-.02em">Weekly Meeting Schedule<br>with Stakeholders</div>
          <div class="mut" style="margin-top:5px;font-size:5.700px">Today, January 30th 2021&nbsp; 04:45 PM</div>
          <div class="d-flex align-items-center" style="margin-top:16px"><i data-ic="reply" class="me-2 ms-1 mut"></i><span class="me-auto">You Replied</span><span class="mut me-1" style="font-size:4.600px;letter-spacing:-.02em">28.01.2021 12:24 AM</span><i data-ic="cd" style="transform:scale(.7)"></i></div>
          <div class="mut" style="margin-top:5.500px;font-size:5.700px">Thankyou, maybe i only have 2 empty schedule<br>for this week..</div>
          <div class="hl" style="margin-top:5px;margin-bottom:6px;border-color:#eceaf2"></div>
          <div class="d-flex align-items-center"><div class="av t" style="margin-right:5px"></div><span class="me-auto">Tamara Scevenko</span><span class="mut me-1" style="font-size:4.600px;letter-spacing:-.02em">28.01.2021 12:24 AM</span><i data-ic="cu" style="transform:scale(.7)"></i></div>
          <div style="margin-top:5px;font-size:5.700px">Hi David,<br><br>Do you remembe about last meeting with<br>Stakeholders? Here you have more information<br>about the next meeting schedule. Visit this link for<br>more info <b class="gr fw-semibold" style="letter-spacing:-.02em">https://geex.meeting.id/stakeholders</b><br><br>Regards,<br>Tamara</div>
          <div style="border:1px solid #eceaf2;border-radius:6px;height:61px;margin-top:8px" class="d-flex flex-column"><div class="mut flex-grow-1" style="padding:9px;font-size:5.900px">Write your message here...</div><div class="d-flex align-items-center" style="border-top:1px solid #eceaf2;height:19px;padding:0 12px;gap:9px;font-size:8px;color:#9b98a8"><b class="pu">B</b><span class="fst-italic">I</span><u>U</u><span class="me-2">T<small style="font-size:5px">T</small></span><i data-ic="al"></i><i data-ic="ac"></i><i data-ic="ar"></i></div></div>
          <div class="d-flex align-items-center mut" style="margin-top:9px;gap:8px;padding-left:4px"><i data-ic="clip"></i><i data-ic="cal"></i><i data-ic="vdots"></i><div class="btn-p d-flex align-items-center justify-content-center ms-auto" style="width:51px"><i data-ic="send"></i>Send</div></div>
        </div>
      </article>

      <!-- 03 contacts -->
      <article class="board d-flex" id="b3">
        <aside class="side" data-on="Contacts"></aside>
        <div style="width:557px;margin-left:26px">
          <div class="hd d-flex" style="height:54.700px"><div class="me-auto"><div class="th">Contacts</div><div class="sb">Welcome to Geex Modern Admin Dashboard</div></div><div class="sr d-flex align-items-center justify-content-between" style="width:228px;margin-right:20px">Search here...<i data-ic="search"></i></div><div class="nb"><i data-ic="chat"></i><span class="bdg">84</span></div><div class="nb"><i data-ic="bell"></i><span class="bdg b">2</span></div><div class="av"></div></div>
          <div class="d-flex align-items-center">
            <div class="btn-p d-flex align-items-center justify-content-center me-auto" style="width:96.500px"><i data-ic="plus"></i>New Contacs</div>
            <div class="btn-p d-flex align-items-center justify-content-center" style="width:85px;background:#e4d3f0;color:#3a3748;border:1px solid #cf9fea"><i data-ic="heart" class="pu"></i>Favourites (20)</div>
            <div class="btn-p d-flex align-items-center justify-content-center" style="width:90px;margin-left:14px;background:#e9e6f2;color:#3a3748">Newest Contacts<i data-ic="cd" class="pu"></i></div>
            <i data-ic="menu" class="ms-4 ps-1 mut" style="color:#8d8a9b"></i><div class="btn-p d-flex align-items-center justify-content-center pu" style="width:23px;background:#e9e6f2;color:#a03fd4;margin-left:13px"><i data-ic="grid"></i></div>
          </div>
          <div class="ccg" id="ccs" style="margin-top:11.500px"></div>
          <div class="d-flex justify-content-between align-items-center" style="margin-top:23px;padding-left:3px"><span style="font-size:5.900px">Showing 9 of 256 data</span><div class="pg d-flex"><span>1</span><span>2</span><span>3</span></div></div>
        </div>
      </article>

      <!-- 04 crypto -->
      <article class="board d-flex" id="b4">
        <aside class="side" data-on="Crypto"></aside>
        <div class="mn" style="width:557px">
          <div class="hd d-flex"><div><div class="th">Crypto</div><div class="sb">Welcome to Geex Modern Admin Dashboard</div></div></div>
          <div class="d-flex" style="gap:15.300px">
            <div class="cd" style="width:118px;height:130px;padding:11.500px"><div class="d-flex"><svg class="coin me-2"><use href="#c-btc"/></svg><div><div style="font-size:8.900px">Bitcoin</div><div style="font-size:5.200px">BTC</div></div></div><div class="d-flex justify-content-between" style="margin-top:15px;font-size:7.600px"><span>$ 33.568,60</span><span class="gr" style="font-size:6.600px">+12,4%</span></div>
              <svg width="98" height="57" viewBox="164 128 98 57" style="margin-top:4px"><g transform="matrix(.3333 0 0 .4655 -44.500 -36)"><path fill="#def3ec" d="M627 436C640 425 648 438 664 438 672 438 676 394 686 394 697 394 728 450 741 450 752 450 760 427 771 427 780 427 795 462 804 462 815 462 822 422 833 422 843 422 842 437 853 437 868 437 892 390 910 364V474H627z"/><path stroke="#e6e4ec" class="p" stroke-width=".6" d="M628 370V474M685 370V474M741 370V474M797 370V474M853 370V474"/><path class="p" stroke="#339b7b" stroke-width="1.400" d="M627 436C640 425 648 438 664 438 672 438 676 394 686 394 697 394 728 450 741 450 752 450 760 427 771 427 780 427 795 462 804 462 815 462 822 422 833 422 843 422 842 437 853 437 868 437 892 390 910 364"/><ellipse cx="909" cy="364" rx="8" ry="6" fill="#339b7b"/></g></svg></div>
            <div class="cd" style="width:118px;height:130px;padding:11.500px"><div class="d-flex"><svg class="coin me-2"><use href="#c-eth"/></svg><div><div style="font-size:8.900px">Ethereum</div><div style="font-size:5.200px">ETH</div></div></div><div class="d-flex justify-content-between" style="margin-top:15px;font-size:7.600px"><span>$ 1.367,82</span><span class="re" style="font-size:6.600px">-0,2%</span></div>
              <svg width="98" height="57" viewBox="297.200 128 98 57" style="margin-top:4px"><g transform="matrix(.3333 0 0 .4655 -44.500 -36)"><path fill="#fbe3e2" d="M1027 396C1035 410 1040 430 1048 430 1058 430 1062 419 1072 419 1083 419 1088 462 1100 462 1112 462 1124 418 1136 418 1146 418 1146 438 1158 438 1180 438 1185 404 1197 404 1210 404 1216 444 1229 444 1240 444 1248 423 1258 423 1270 423 1274 453 1290 453H1310V474H1027z"/><path stroke="#f0d9df" class="p" stroke-width=".6" d="M1028 370V474M1084 370V474M1141 370V474M1197 370V474M1253 370V474M1309 370V474"/><path class="p" stroke="#ee5a52" stroke-width="1.400" d="M1027 396C1035 410 1040 430 1048 430 1058 430 1062 419 1072 419 1083 419 1088 462 1100 462 1112 462 1124 418 1136 418 1146 418 1146 438 1158 438 1180 438 1185 404 1197 404 1210 404 1216 444 1229 444 1240 444 1248 423 1258 423 1270 423 1274 453 1290 453H1306"/><ellipse cx="1306" cy="453" rx="8" ry="6" fill="#ee5a52"/></g></svg></div>
            <div class="cd" style="width:118px;height:130px"></div>
          </div>
          <div class="cd" style="height:259px;margin-top:15.500px;padding:12px 11.500px 0">
            <div class="ts">Core Assets</div>
            <div class="d-flex" style="gap:5.500px;margin-top:10px"><div class="d-flex align-items-center justify-content-center gap-1" style="height:24.500px;width:57.500px;border-radius:6px;background:#f1f0f7"><svg class="coin s"><use href="#c-btc"/></svg>Bitcoin</div><div class="d-flex align-items-center justify-content-center gap-1" style="width:66.500px"><svg class="coin s"><use href="#c-eth"/></svg>Ethereum</div><div class="d-flex align-items-center justify-content-center gap-1" style="width:59.500px"><svg class="coin s"><use href="#c-ltc"/></svg>Litecoin</div><div style="height:23px;line-height:23px;width:70px;border-radius:6px;background:#e9e6f2;padding-left:10px;margin-left:43.500px">Market</div></div>
            <div class="d-flex" style="margin-top:16px"><div class="kpi border-0 ps-0" style="width:58px">Bitcoin<b>BTC / USD</b></div><div class="kpi" style="width:74px">Mark Price<b>148.42 <span class="re" style="font-size:5px">-3.28%</span></b></div><div class="kpi" style="width:81px">Funding Rate<b>-0,0252%/hr</b></div><div class="kpi">Volume<b>104k</b></div></div>
            <svg width="270" height="140" viewBox="164 320 270 140" style="margin-top:14px" id="candle"></svg>
          </div>
          <div class="d-flex" style="gap:15.300px;margin-top:15.500px">
            <div class="cd" style="width:118px;height:182px;padding-top:12px" id="mps"><div class="ts" style="padding-left:11.500px;margin-bottom:12px">Market Previews</div></div>
            <div class="cd" style="width:420px;height:182px"><svg width="160" height="182" viewBox="285.500 484 160 182">
              <text x="297" y="504.800" class="k hdg">Market Acitivty</text>
              <circle cx="299.500" cy="521.700" r="2.300" fill="#a03fd4"/><text x="304.500" y="523.500" class="k" style="font-size:4.600px">Your Profits</text><circle cx="347.500" cy="521.700" r="2.300" fill="#339b7b"/><text x="352.500" y="523.500" class="k" style="font-size:4.600px">Buys</text><circle cx="380.800" cy="521.700" r="2.300" fill="#ee5a52"/><text x="386" y="523.500" class="k" style="font-size:4.600px">Sells</text>
              <g text-anchor="end"><text x="304.500" y="557.500">100</text><text x="304.500" y="582">75</text><text x="304.500" y="601.500">50</text><text x="304.500" y="621">25</text><text x="304.500" y="640.500">0</text></g>
              <g transform="matrix(.3333 0 0 .4655 -44.500 -36)"><path class="p" stroke="#efedf4" stroke-width=".8" d="M1070 1242V1450M1170 1242V1450M1271 1242V1450M1372 1242V1450M1070 1271H1440M1070 1315H1440M1070 1360H1440M1070 1405H1440M1070 1449H1440"/><path fill="#ecdcf5" opacity=".85" d="M1271 1335C1285 1300 1298 1236 1327 1236S1355 1240 1368 1270C1385 1310 1400 1362 1426 1366L1440 1366V1450H1271z"/><path class="p" stroke="#ecdcf5" stroke-width="1.600" d="M1072 1380C1100 1330 1115 1314 1138 1314 1175 1314 1185 1396 1233 1396 1258 1396 1262 1350 1271 1335"/><path class="p" stroke="#a03fd4" stroke-width="1.800" d="M1271 1335C1285 1300 1298 1236 1327 1236S1355 1240 1368 1270C1385 1310 1400 1362 1426 1366"/><path class="p" stroke="#339b7b" d="M1072 1405C1100 1410 1120 1417 1143 1417S1205 1397 1233 1397 1295 1434 1327 1434 1385 1410 1426 1404"/><path class="p" stroke="#ee5a52" d="M1072 1395C1100 1405 1140 1427 1172 1427S1230 1401 1265 1401 1325 1422 1348 1422 1395 1395 1426 1385"/><ellipse cx="1271" cy="1335" rx="8" ry="6" fill="#a03fd4"/></g>
              <rect x="428" y="555" width="30" height="24" rx="3" fill="#3a3748"/>
              <g text-anchor="middle"><text x="317" y="654">Sun</text><text x="352" y="654">Mon</text><text x="386.500" y="654">Tue</text><text x="422" y="654" class="k">Wed</text></g></svg></div>
          </div>
        </div>
      </article>

      <div class="ann" id="r1"></div><div class="ann" id="r2"></div><div class="ann" id="r3"></div><div class="ann" id="r4"></div><div class="ann" id="r5"></div>
      <div class="sbv"></div><div class="sbh"></div>
    </section>

    <section class="pane position-relative">
      <div class="phead d-flex align-items-center gap-3"><b class="fw-semibold">Design</b><span class="dim">Prototype</span><span class="dim">Inspect</span></div>
      <div style="height:81px;padding:8px 16px 0;border-bottom:1px solid #e2e2e2"><b class="fw-semibold d-block" style="line-height:32px">Background</b><div class="d-flex align-items-center" style="height:32px"><span class="swt me-2"></span><span style="width:73px">E5E5E5</span>100%<i data-ic="eye" class="ms-auto"></i></div></div>
      <div class="sec"><div class="st">Text Styles</div><div class="si">Display</div><div class="si">Heading</div><div class="si">Body</div><div class="si">Button</div><div class="si">Label</div><div class="si">Input</div><div class="si">Placeholder</div><div class="si">Table</div><div class="si">Menu</div></div>
      <div class="sec pt-0 mt-2 pt-1"><div class="st">Color Styles</div><div class="si">Light Theme Color</div><div class="si">Transparent Color</div><div class="si">Dark Theme Color</div></div>
      <div class="sec pt-0 mt-2 pt-1"><div class="st">Effect Styles</div><div class="si">Shadow</div></div>
      <div class="sec pt-0 mt-2 pt-1"><div class="st">Grid Styles</div><div class="si">Grid</div></div>
      <div class="d-flex align-items-center justify-content-between dim" style="height:49px;margin-top:20px;border:solid #e2e2e2;border-width:1px 0;padding:0 18px 0 16px"><b class="fw-semibold">Export</b><i data-ic="plus"></i></div>
      <div class="help position-absolute d-flex align-items-center justify-content-center">?</div>
    </section>
  </main>
</div></div>

<script>
const $ = s => document.querySelector(s);
const ico = n => `<svg class="ic"><use href="#${n}"/></svg>`;
const fav = n => `<span class="fav"><svg><use href="#${n}"/></svg></span>`;

$('#tabs').innerHTML = [['f-gh','GitHub'],['f-z','Node JS - SDK | Zoho CRM - On'],['f-gh','zoho/zohocrm-nodejs-sdk-2.0'],['f-ddg','react avoid cros at DuckDuckGo'],['f-yt','(2) zoho crm api cros - YouTube'],['f-re','Cross-origin Errors – React'],['f-wp','Output | webpack'],['f-fg','Geex_ModernAdminDashboard_']]
  .map((t,i) => `<div class="btab d-flex align-items-center ${i==7?'on':''}">${fav(t[0])}<span class="ttl">${t[1]}</span><span class="x">${ico('x')}</span></div>`).join('');
$('#marks').innerHTML = [['f-wk','Zoho Workplace - D...',147],['f-z','USA Partner',97.3],['f-tr','Trolls World Tour (2...',145],['f-oj','Online JSON Viewer',138],['f-gm','Letter - midfar.intl@...',147],['f-js','Json Parser Online',130],['f-df','Deluge Functions',123],['f-z','Deluge Tasks | Help...',146.5],['f-z','My Area | Zoho Sup...',147],['f-gs','Additional Expenses...',146.6],['f-jf','Best JSON Formatt...',147],['f-ff','New Tab',90]]
  .map(m => `<div class="mk d-flex align-items-center" style="width:${m[2]}px">${fav(m[0])}${m[1]}</div>`).join('');
$('#exts').innerHTML = [ico('pocket'),ico('books'),fav('f-face'),ico('tiles'),fav('f-k'),fav('f-q'),ico('dl'),fav('f-bg'),fav('f-hg'),fav('f-bp'),fav('f-re'),ico('menu')].join('');

const names = ['Color&TextStyles','FormElements','Notification&LatestActiv...','ChatMessenger','ToDoListDashboard','CalendarDashboard','UserDashboard','FileManagerDashboard','BankingDashboard','InvoicingDashboard','KanbanDashboard','CryptoDashboard','ContactDashboard','EmailDashboard','GenericDashboard'];
let rows = '';
for (let n = 30; n > 0; n--) {
  rows += `<div class="lay frm d-flex align-items-center"><i>${ico('hash')}</i>${String(n).padStart(2,'0')}_${n>15?'Dark':'Light'}_${names[(30-n)%15]}</div>`;
  if (n == 2) rows += [[1,'grp','LEFT-SIDEBAR'],[1,'grp','RIGHT-SIDEBAR'],[1,'grp','CONTENT'],[2,'dia','NAVBAR/Short/Light'],[2,'grp','Menus'],[2,'grp','MAIL-LIST'],[2,'dia','Pagination/Light'],[1,'grp','BACKGROUND']]
    .map(r => `<div class="lay d${r[0]} ${r[1]=='dia'?'cmp':'grp'} d-flex align-items-center"><i>${ico(r[1])}</i>${r[2]}</div>`).join('');
}
$('#layers').innerHTML = rows;

const nav = [['home','Dashboard'],['mail','Email'],['user','Contacts'],['coin','Crypto'],['grid','Kanban'],['file','Invoicing'],['wallet','Banking'],['folder','File Manager'],['cal','Calendar'],['pencil','Todo List']];
document.querySelectorAll('.side').forEach(s => s.innerHTML = `<div class="lg d-flex"><svg width="27" height="28"><use href="#geex"/></svg><div><b>Geex</b><small>Modern Admin Dashboard</small></div></div>
<div class="nv d-flex flex-column">${nav.map(n => `<div class="d-flex align-items-center ${n[1]==s.dataset.on?'on':''}"><i>${ico(n[0])}</i>${n[1]}</div>`).join('')}</div>
<div class="ft"><b>Geex Modern Dashboard</b><span>© 2021 All Rights Reserved</span><span>Made with <em class="fst-normal" style="color:#d02b2b">♥</em> by Peterdraw</span></div>`);

$('#xl').innerHTML = ['14.10','14.20','14.30','14.40','14.50','14.60','15.00','15.10','15.20','15.30'].map((t,i) => `<text x="${201+i*33.5}" y="261.500" ${i==5?'class="k"':''}>${t}</text>`).join('');

$('#revs').innerHTML = [['Jons Sena',2,'Architecto consequatur molestias<br>repellat qui. Quia est asd<br>doloremque veniam est rerum.<br>Soluta'],['Kevin Hunt',4,'Ab architecto provident ex<br>accusantium deserunt. Aut<br>aspernatur deleniti sit maiores ut<br>id cum accusamus. Beatae n'],['Isabbelle',5,'Sed eligendi facere repellendus.<br>Ipsam ipsam incidunt minima<br>harum tenetur. Ab sit asperiores<br>architecto repudiandae.']]
  .map((r,i) => `<div class="cd rev"><div class="d-flex"><div class="av s me-1"></div><div class="ps-1"><div style="font-size:7.300px">${r[0]}</div><div class="mut mt-1" style="font-size:5.800px;line-height:6px">${r[1]} days ago</div></div></div><div class="tx">${r[2]}</div><div class="d-flex gap-2 mt-2" style="font-size:5.800px">${i<2?'<span class="re me-1">Archive</span><span class="gr">Accept</span>':'<span class="gr">Published</span><i class="pu">'+ico('right')+'</i>'}</div></div>`).join('');

/* server status: x, top, solid start, colour (chart units) */
let sv = '';
[[574,147.500,184,'#ee5a52'],[591,115.500,160,'#339b7b'],[608.500,132.500,159,'#339b7b'],[626,132,176,'#f1b44c'],[643.500,115.500,161,'#339b7b'],[661,167,192,'#ee5a52'],[678.500,132,154,'#339b7b']].forEach((b,i) => {
  sv += `<g stroke="${b[3]}" stroke-width="3.200" stroke-linecap="round"><path opacity=".2" d="M${b[0]} ${b[1]+1.5}V190"/><path opacity=".25" d="M${b[0]} ${(b[1]+b[2])/2}V190"/><path d="M${b[0]} ${b[2]+1}V194"/></g><text text-anchor="middle" x="${b[0]}" y="210">${['Sun','Mon','Tue','Wed','Thu','Fri','Sat'][i]}</text>`;
});
['10 AM','8 AM','6 AM','4 AM','2 AM'].forEach((t,i) => sv += `<text text-anchor="end" x="710" y="${116.5+i*19.5}">${t}</text>`);
$('#srv').innerHTML = sv;

$('#mbox').innerHTML += [['inbox','Inbox'],['send','Sent Emails'],['star','Favourite'],['edit','Draft'],['trash','Deleted'],['cd','More']].map((m,i) => `<div class="mm d-flex align-items-center ${i?'':'pu'}"><i ${i?'':'style="color:inherit"'}>${ico(m[0])}</i>${m[1]}${i?'':'<span class="bdg b ms-auto" style="margin-right:16px">17</span>'}</div>`).join('')
 + `<div class="d-flex mut justify-content-between" style="padding:12px 13px 10px 11.500px;font-size:6.400px">Labels<i style="color:#555">${ico('hdots')}</i></div>`
 + [['#a03fd4','Work in Progress'],['#339b7b','Read Later'],['#f1b44c','Importants'],['#6cbaf8','Offers'],['','Add lable']].map(m => `<div class="mm lb d-flex align-items-center ${m[0]?'':'mut'}"><i style="color:${m[0]||'#8d8a9b'}">${ico(m[0]?'label':'addc')}</i>${m[1]}</div>`).join('');

$('#ccs').innerHTML = [['Ahmed Leffler','Central Usability Officer'],['Brian Pfeffer','Chief Tactics Supervisor'],['Crhistine Zboncak','UI Designer'],['David Koelpin','District Mobility Designer'],['Erika Smitham','Backend Developer'],['Franklin Stiedemann','Corporate Creative Assistant'],['Geovanny Bruen','UI Designer'],['John Okuneva','Internal Operations Engineer'],['Tamara Scevenko','Graphic Designer'],['Thomas Wunsch','Central Operations Assistant'],['Veronica Hodkiewicz','UI Designer'],['Zen Heller','Customer Quality Specialist']]
  .map(c => `<div class="cd cc"><div class="d-flex align-items-center top"><div class="av me-auto"></div><i>${ico('heart')}</i><i>${ico('vdots')}</i></div><div class="nm">${c[0]}</div><div class="rl mut">${c[1]}</div>${[['brief','Highspeed Studios'],['phone','+012 345 689'],['mail','tamara@mail.com']].map(r => `<div class="rw d-flex align-items-center"><i>${ico(r[0])}</i>${r[1]}</div>`).join('')}</div>`).join('');

$('#mps').innerHTML += [['ltc','LTC/USD','March','120.45','1.24%','gr'],['btc','BTC/USD','January','149.50','-2.24%','re'],['eth','ETH/USD','January','149.50','-2.24%','re'],['xrp','XRP/USD','January','149.50','-2.24%','re'],['btc','BTC/USD','January','149.50','-2.24%','re']]
  .map(m => `<div class="mp d-flex align-items-center"><svg class="coin m"><use href="#c-${m[0]}"/></svg><div>${m[1]}<div class="mut" style="font-size:5.200px">${m[2]}</div></div><div class="ms-auto text-end"><b class="fw-semibold" style="font-size:5.700px">${m[3]}</b><div class="${m[5]}" style="font-size:5px">${m[4]}</div></div></div>`).join('');

/* candles: wick top, wick bottom, body top, body bottom, rising? */
const cs = [[822,892,836,878,1],[840,912,856,896,1],[858,926,879,911,0],[872,944,876,929,1],[888,957,893,941,0],[884,942,899,928,0],[858,930,873,925,0],[878,913,894,902,1],[828,924,852,908,0],[791,904,829,884,1],[802,867,816,866,0],[802,848,805,828,1],[803,859,818,857,0],[814,857,834,854,1],[821,890,835,876,0],[848,882,858,870,0],[845,908,859,891,0],[872,909,879,898,0],[887,921,891,904,0]];
const vs = [[0,32],[1,10],[0,50],[0,18],[0,4],[0,26],[0,34],[1,9],[0,28],[1,30],[0,39],[1,15],[0,22],[0,18],[0,39],[0,8],[0,18],[1,50],[1,35],[1,11],[0,18],[0,44],[1,18],[0,38],[1,24],[1,16],[1,34],[0,27],[1,8],[0,45],[0,15],[0,6]];
let ch = '<g transform="matrix(.3333 0 0 .4655 -44.500 -36)"><path class="p" stroke="#dddbe4" stroke-width=".7" stroke-dasharray="2 2" d="M625 781H1440M625 862H1440M625 942H1440M625 1024H1440M703 781V1024M866 781V1024M1030 781V1024M1192 781V1024M1354 781V1024"/>';
vs.forEach((v,i) => ch += `<rect x="${654+i*24.1}" y="${1024-v[1]}" width="10" height="${v[1]}" fill="${v[0]?'#d5efe5':'#fadfde'}"/>`);
cs.forEach((c,i) => { const x = 670+i*40.2, k = c[4]?'#339b7b':'#ee5a52'; ch += `<path class="p" stroke="${k}" d="M${x} ${c[0]}V${c[1]}"/><rect x="${x-7}" y="${c[2]}" width="14" height="${c[3]-c[2]}" fill="${k}"/>`; });
ch += '<path class="p" stroke="#6cbfae" stroke-width=".7" d="M633 970C680 948 715 934 742 934 790 936 880 966 928 966 990 960 1060 920 1140 917 1230 915 1370 948 1400 948L1426 946"/><path class="p" stroke="#f0908b" stroke-width=".7" d="M642 986C690 960 720 947 745 947 800 950 880 972 930 972 990 965 1060 915 1140 916 1230 918 1370 939 1400 939L1426 936"/><path class="p" stroke="#3a3748" d="M632 836H1440"/><path fill="#3a3748" d="m630 829 8 7-8 7z"/></g>';
['3:00PM','4:00PM','5:00PM','6:00PM','7:00PM'].forEach((t,i) => ch += `<text text-anchor="middle" x="${190+i*54}" y="457" style="font-size:5.600px">${t}</text>`);
$('#candle').innerHTML = ch;

document.querySelectorAll('i[data-ic]').forEach(e => e.innerHTML = ico(e.dataset.ic));
</script>
<script src="https://cdn.jsdelivr.net/npm/bootstrap@5.3.0/dist/js/bootstrap.bundle.min.js"></script>
</body>
</html>
